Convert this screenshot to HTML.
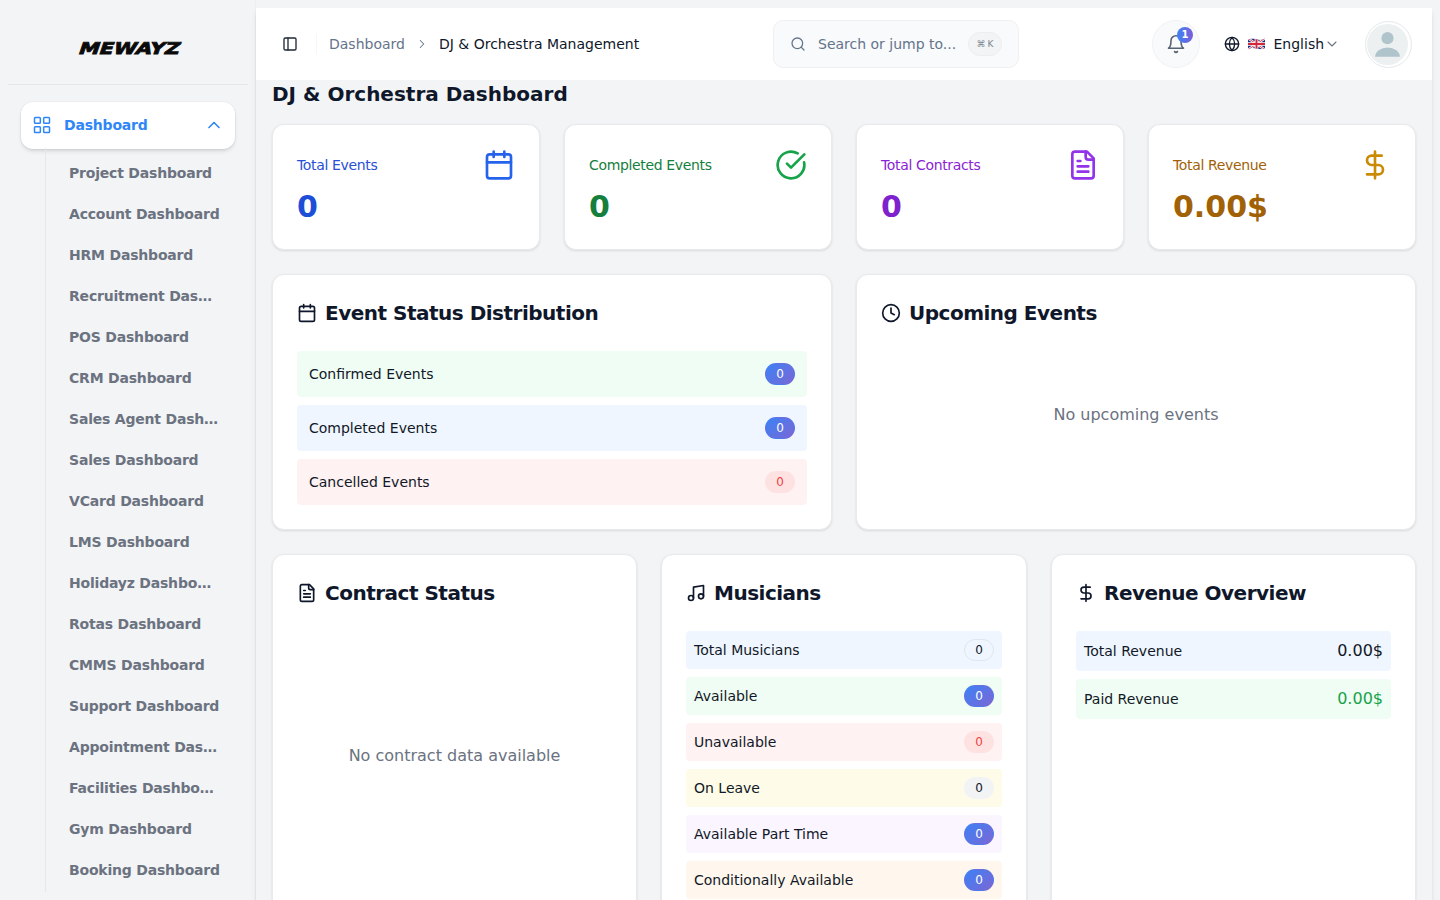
<!DOCTYPE html>
<html lang="en">
<head>
<meta charset="utf-8">
<title>DJ &amp; Orchestra Dashboard</title>
<style>
*{box-sizing:border-box;margin:0;padding:0}
html,body{width:1440px;height:900px;overflow:hidden}
body{background:#f3f4f6;font-family:"DejaVu Sans","Liberation Sans",sans-serif;color:#0f172a;font-size:14px;position:relative}
svg{display:block}
.ic{fill:none;stroke:currentColor;stroke-width:2;stroke-linecap:round;stroke-linejoin:round}

/* sidebar */
#side{position:absolute;left:0;top:0;width:256px;height:900px;background:#f3f4f6;border-right:1px solid #eceef1}
#logo{position:absolute;left:0;top:0;width:256px;height:84px}
#sdiv{position:absolute;left:8px;top:84px;width:240px;height:1px;background:#e5e7eb}
#dashbtn{position:absolute;left:21px;top:101.5px;letter-spacing:-0.2px;width:214px;height:47px;background:#fff;border-radius:12px;box-shadow:0 0 0 1px rgba(0,0,0,.03),0 3px 5px -1px rgba(0,0,0,.1),0 2px 4px -2px rgba(0,0,0,.1);color:#2f86f6;font-weight:700;font-size:14px}
#dashbtn .g{position:absolute;left:11px;top:13px;width:20px;height:20px;stroke-width:1.8}
#dashbtn .t{position:absolute;left:43px;top:0.5px;line-height:47px}
#dashbtn .c{position:absolute;left:183px;top:13.5px;width:20px;height:20px}
#vline{position:absolute;left:45px;top:148px;width:1px;height:744px;background:#e5e7eb}
#sub{position:absolute;left:69px;top:153px;width:160px;letter-spacing:-0.2px}
#sub div{height:41px;line-height:41px;font-size:14px;font-weight:700;color:#6b7280;white-space:nowrap}

/* main */
#main{position:absolute;left:256px;top:8px;width:1176px;height:900px;box-shadow:0 4px 6px -1px rgba(0,0,0,.1),0 2px 4px -2px rgba(0,0,0,.1)}
#hdr{position:absolute;left:0;top:0;width:1176px;height:72px;background:#fff}
#hdr .tog{position:absolute;left:26px;top:28px;width:16px;height:16px;color:#1f2937}
#hdr .sep{position:absolute;left:60px;top:26px;width:1px;height:20px;background:#f6f7f8}
#hdr .bc{position:absolute;left:73px;top:0;line-height:72px;font-size:14px;color:#64748b;white-space:nowrap}
#hdr .bc b{font-weight:400;color:#0f172a}
#hdr .bc .ar{display:inline-block;width:34px;height:14px;vertical-align:-2px;color:#64748b}
#hdr .bc .ar svg{width:14px;height:14px;margin:0 auto;stroke-width:1.8}
#search{position:absolute;left:517px;top:12px;width:246px;height:48px;border:1px solid #eef0f3;border-radius:10px;background:#f9fafb}
#search .m{position:absolute;left:16px;top:15px;width:16px;height:16px;color:#64748b;stroke-width:1.9}
#search .p{position:absolute;left:44px;top:0;line-height:46px;font-size:14px;color:#64748b}
#search .k{position:absolute;left:194px;top:11px;width:34px;height:24px;border-radius:12px;background:#f3f4f6;border:1px solid #eceef1;font-size:9px;color:#7b8494;text-align:center;line-height:22px;white-space:nowrap}
#search .k i{font-style:normal;font-size:9px;margin-right:2px}
#bell{position:absolute;left:896px;top:12px;width:48px;height:48px;border-radius:24px;background:#f9fafb;border:1px solid #f1f2f4}
#bell svg{position:absolute;left:13px;top:13px;width:20px;height:20px;color:#566172;stroke-width:1.9}
#bell .n{position:absolute;left:24px;top:6px;width:16px;height:16px;border-radius:8px;background:linear-gradient(90deg,#3b82f6,#7c5fd6);color:#fff;font-size:10px;font-weight:700;text-align:center;line-height:16px}
#lang{position:absolute;left:968px;top:0;height:72px}
#lang .gl{position:absolute;left:0;top:28px;width:16px;height:16px;color:#111827}
#lang .fl{position:absolute;left:24px;top:30px;width:17px;height:12px}
#lang .t{position:absolute;left:49.5px;top:0;line-height:72px;font-size:14px;color:#0f172a}
#lang .cv{position:absolute;left:100px;top:28px;width:16px;height:16px;color:#6b7280;stroke-width:1.6}
#ava{position:absolute;left:1108.5px;top:13px;width:47px;height:47px;border-radius:24px;border:1.5px solid #e3e9eb;padding:1.5px;background:#fff}
#ava svg{width:41px;height:41px}

h1{position:absolute;left:16px;top:72px;font-size:20px;line-height:28px;font-weight:700;color:#0f172a;white-space:nowrap}
.card{position:absolute;background:#fff;border:1px solid #e8eaed;border-radius:12px;box-shadow:0 1px 3px rgba(0,0,0,.08),0 1px 2px rgba(0,0,0,.04)}
.stat .l{position:absolute;left:24px;top:30px;font-size:14px;line-height:20px;white-space:nowrap;letter-spacing:-0.35px}
.stat .v{position:absolute;left:24px;top:64px;font-size:30px;line-height:36px;font-weight:700;white-space:nowrap}
.stat svg{position:absolute;right:24px;top:24px;width:32px;height:32px}
.card h2{position:absolute;left:24px;top:24px;font-size:20px;line-height:28px;font-weight:700;color:#0f172a;white-space:nowrap;padding-left:28px;letter-spacing:-0.5px}
.card h2 svg{position:absolute;left:0;top:4px;width:20px;height:20px}
.rows{position:absolute;left:24px;right:24px}
.row{position:relative;border-radius:4px;margin-bottom:8px;font-size:14px;color:#111827}
.row .t{position:absolute;top:0;white-space:nowrap}
.bd{position:absolute;height:22px;border-radius:11px;font-size:12px;line-height:22px;text-align:center;width:30px}
.bd.b{background:linear-gradient(135deg,#3b82f6,#7c66d4);border:1px solid transparent;line-height:20px;color:#fff}
.bd.r{background:#fee2e2;color:#ef4444}
.bd.o{background:transparent;border:1px solid #e2e6ec;color:#111827;line-height:20px}
.bd.s{background:#f1f3f5;color:#111827}
.ev .row{height:46px}.ev .row .t{left:12px;line-height:46px}.ev .bd{right:12px;top:12px}
.mu .row{height:38px}.mu .row .t{left:8px;line-height:38px}.mu .bd{right:8px;top:8px}
.rv .row{height:40px}.rv .row .t{left:8px;line-height:40px}.rv .row .a{position:absolute;right:8px;top:0;line-height:40px;font-size:16px}
.empty{position:absolute;left:0;right:0;text-align:center;font-size:16px;line-height:24px;color:#6b7280}
</style>
</head>
<body>
<div id="side">
  <div id="logo">
    <svg width="256" height="84" viewBox="0 0 256 84"><text transform="translate(77.4 53.6) skewX(-19)" x="0" y="0" font-family="DejaVu Sans, Liberation Sans, sans-serif" font-weight="700" font-size="16.3" fill="#0a0a0a" stroke="#0a0a0a" stroke-width="0.85" textLength="101" lengthAdjust="spacingAndGlyphs">MEWAYZ</text></svg>
  </div>
  <div id="sdiv"></div>
  <div id="dashbtn">
    <svg class="g ic" viewBox="0 0 24 24"><rect x="3" y="3" width="7" height="7" rx="1"/><rect x="14" y="3" width="7" height="7" rx="1"/><rect x="3" y="14" width="7" height="7" rx="1"/><rect x="14" y="14" width="7" height="7" rx="1"/></svg>
    <span class="t">Dashboard</span>
    <svg class="c ic" viewBox="0 0 24 24"><path d="M6 15l6-6 6 6"/></svg>
  </div>
  <div id="vline"></div>
  <div id="sub">
    <div>Project Dashboard</div>
    <div>Account Dashboard</div>
    <div>HRM Dashboard</div>
    <div>Recruitment Das…</div>
    <div>POS Dashboard</div>
    <div>CRM Dashboard</div>
    <div>Sales Agent Dash…</div>
    <div>Sales Dashboard</div>
    <div>VCard Dashboard</div>
    <div>LMS Dashboard</div>
    <div>Holidayz Dashbo…</div>
    <div>Rotas Dashboard</div>
    <div>CMMS Dashboard</div>
    <div>Support Dashboard</div>
    <div>Appointment Das…</div>
    <div>Facilities Dashbo…</div>
    <div>Gym Dashboard</div>
    <div>Booking Dashboard</div>
  </div>
</div>

<div id="main">
  <div id="hdr">
    <svg class="tog ic" viewBox="0 0 24 24"><rect x="3" y="3" width="18" height="18" rx="2"/><path d="M9 3v18"/></svg>
    <div class="sep"></div>
    <div class="bc">Dashboard<span class="ar"><svg class="ic" viewBox="0 0 24 24"><path d="M9 18l6-6-6-6"/></svg></span><b>DJ &amp; Orchestra Management</b></div>
    <div id="search">
      <svg class="m ic" viewBox="0 0 24 24"><circle cx="11" cy="11" r="8"/><path d="M21 21l-4.3-4.3"/></svg>
      <span class="p">Search or jump to...</span>
      <span class="k"><i>⌘</i>K</span>
    </div>
    <div id="bell">
      <svg class="ic" viewBox="0 0 24 24"><path d="M6 8a6 6 0 0 1 12 0c0 7 3 9 3 9H3s3-2 3-9"/><path d="M10.3 21a1.94 1.94 0 0 0 3.4 0"/></svg>
      <span class="n">1</span>
    </div>
    <div id="lang">
      <svg class="gl ic" viewBox="0 0 24 24"><circle cx="12" cy="12" r="10"/><path d="M2 12h20"/><path d="M12 2a15.3 15.3 0 0 1 4 10 15.3 15.3 0 0 1-4 10 15.3 15.3 0 0 1-4-10 15.3 15.3 0 0 1 4-10z"/></svg>
      <svg class="fl" viewBox="0 0 60 40"><defs><clipPath id="wv"><path d="M0 5C10 -1 20 -1 30 3S50 7 60 1V35C50 41 40 39 30 36S10 33 0 39Z"/></clipPath></defs><g clip-path="url(#wv)"><rect width="60" height="40" fill="#1a2f80"/><path d="M0 0L60 40M60 0L0 40" stroke="#fff" stroke-width="8"/><path d="M0 0L60 40M60 0L0 40" stroke="#d3283c" stroke-width="3"/><path d="M30 0v40M0 20h60" stroke="#fff" stroke-width="13"/><path d="M30 0v40M0 20h60" stroke="#d3283c" stroke-width="7"/></g></svg>
      <span class="t">English</span>
      <svg class="cv ic" viewBox="0 0 24 24"><path d="M6 9l6 6 6-6"/></svg>
    </div>
    <div id="ava">
      <svg viewBox="0 0 40 40"><circle cx="20" cy="20" r="20" fill="#ecf0f1"/><circle cx="20" cy="13.8" r="5.9" fill="#b0c4cc"/><path d="M7.9 31.9a12.1 8.9 0 0 1 24.2 0z" fill="#b0c4cc"/></svg>
    </div>
  </div>

  <h1>DJ &amp; Orchestra Dashboard</h1>

  <div class="card stat" style="left:16px;top:116px;width:268px;height:126px;color:#1d4ed8">
    <span class="l" style="color:#2a4fd6">Total Events</span><span class="v" style="color:#1d4ed8">0</span>
    <svg class="ic" viewBox="0 0 24 24" style="color:#2563eb"><rect x="3" y="4" width="18" height="18" rx="2"/><path d="M16 2v4M8 2v4M3 10h18"/></svg>
  </div>
  <div class="card stat" style="left:308px;top:116px;width:268px;height:126px">
    <span class="l" style="color:#15803d">Completed Events</span><span class="v" style="color:#15803d">0</span>
    <svg class="ic" viewBox="0 0 24 24" style="color:#16a34a"><path d="M21.8 10A10 10 0 1 1 17 3.34"/><path d="M9 11l3 3L22 4"/></svg>
  </div>
  <div class="card stat" style="left:600px;top:116px;width:268px;height:126px">
    <span class="l" style="color:#8b22d6">Total Contracts</span><span class="v" style="color:#7e22ce">0</span>
    <svg class="ic" viewBox="0 0 24 24" style="color:#9333ea"><path d="M15 2H6a2 2 0 0 0-2 2v16a2 2 0 0 0 2 2h12a2 2 0 0 0 2-2V7z"/><path d="M14 2v4a2 2 0 0 0 2 2h4M10 9H8M16 13H8M16 17H8"/></svg>
  </div>
  <div class="card stat" style="left:892px;top:116px;width:268px;height:126px">
    <span class="l" style="color:#a16207">Total Revenue</span><span class="v" style="color:#a16207">0.00$</span>
    <svg class="ic" viewBox="0 0 24 24" style="color:#ca8a04"><path d="M12 2v20M17 5H9.5a3.5 3.5 0 0 0 0 7h5a3.5 3.5 0 0 1 0 7H6"/></svg>
  </div>

  <div class="card" style="left:16px;top:266px;width:560px;height:256px">
    <h2><svg class="ic" viewBox="0 0 24 24"><rect x="3" y="4" width="18" height="18" rx="2"/><path d="M16 2v4M8 2v4M3 10h18"/></svg>Event Status Distribution</h2>
    <div class="rows ev" style="top:76px">
      <div class="row" style="background:#f0fdf4"><span class="t">Confirmed Events</span><span class="bd b">0</span></div>
      <div class="row" style="background:#eff6ff"><span class="t">Completed Events</span><span class="bd b">0</span></div>
      <div class="row" style="background:#fef2f2"><span class="t">Cancelled Events</span><span class="bd r">0</span></div>
    </div>
  </div>
  <div class="card" style="left:600px;top:266px;width:560px;height:256px">
    <h2><svg class="ic" viewBox="0 0 24 24"><circle cx="12" cy="12" r="10"/><path d="M12 6v6l4 2"/></svg>Upcoming Events</h2>
    <div class="empty" style="top:128px">No upcoming events</div>
  </div>

  <div class="card" style="left:16px;top:546px;width:365px;height:400px">
    <h2><svg class="ic" viewBox="0 0 24 24"><path d="M15 2H6a2 2 0 0 0-2 2v16a2 2 0 0 0 2 2h12a2 2 0 0 0 2-2V7z"/><path d="M14 2v4a2 2 0 0 0 2 2h4M10 9H8M16 13H8M16 17H8"/></svg>Contract Status</h2>
    <div class="empty" style="top:189px">No contract data available</div>
  </div>
  <div class="card" style="left:405px;top:546px;width:366px;height:400px">
    <h2><svg class="ic" viewBox="0 0 24 24"><path d="M9 18V5l12-2v13"/><circle cx="6" cy="18" r="3"/><circle cx="18" cy="16" r="3"/></svg>Musicians</h2>
    <div class="rows mu" style="top:76px">
      <div class="row" style="background:#eff6ff"><span class="t">Total Musicians</span><span class="bd o">0</span></div>
      <div class="row" style="background:#f0fdf4"><span class="t">Available</span><span class="bd b">0</span></div>
      <div class="row" style="background:#fef2f2"><span class="t">Unavailable</span><span class="bd r">0</span></div>
      <div class="row" style="background:#fefce8"><span class="t">On Leave</span><span class="bd s">0</span></div>
      <div class="row" style="background:#faf5ff"><span class="t">Available Part Time</span><span class="bd b">0</span></div>
      <div class="row" style="background:#fff7ed"><span class="t">Conditionally Available</span><span class="bd b">0</span></div>
    </div>
  </div>
  <div class="card" style="left:795px;top:546px;width:365px;height:400px">
    <h2><svg class="ic" viewBox="0 0 24 24"><path d="M12 2v20M17 5H9.5a3.5 3.5 0 0 0 0 7h5a3.5 3.5 0 0 1 0 7H6"/></svg>Revenue Overview</h2>
    <div class="rows rv" style="top:76px">
      <div class="row" style="background:#eff6ff"><span class="t">Total Revenue</span><span class="a" style="color:#111827">0.00$</span></div>
      <div class="row" style="background:#f0fdf4"><span class="t">Paid Revenue</span><span class="a" style="color:#16a34a">0.00$</span></div>
    </div>
  </div>
</div>
</body>
</html>
